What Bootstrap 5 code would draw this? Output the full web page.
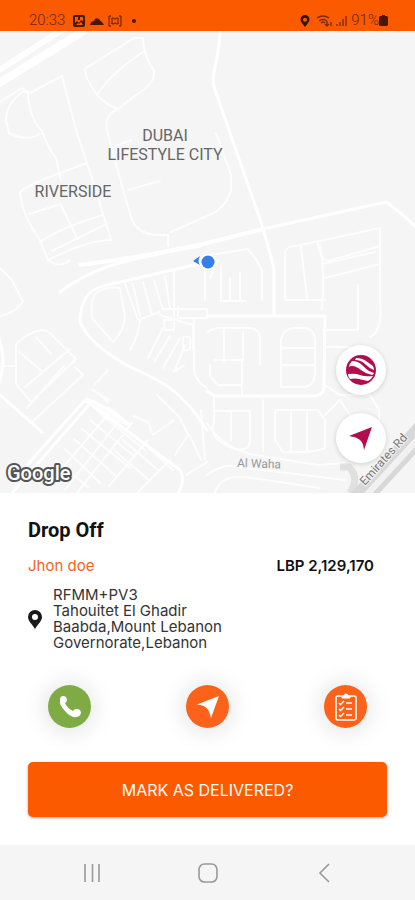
<!DOCTYPE html>
<html lang="en">
<head>
<meta charset="utf-8">
<meta name="viewport" content="width=device-width, initial-scale=1">
<title>Drop Off</title>
<link href="https://cdn.jsdelivr.net/npm/bootstrap@5.3.0/dist/css/bootstrap.min.css" rel="stylesheet">
<style>
  body { font-family: Inter, "Liberation Sans", sans-serif; color: #111; background: #fff; }
  .status-bar { background: #fb5a00; color: #6b2600; height: 31px; padding: 10px 27px 0 29px; font: 300 15px/21px Roboto, sans-serif; }
  .map-area { background: #f5f5f5; min-height: 300px; flex: 1 1 0; }
  .map-canvas { position: absolute; inset: 0; width: 100%; height: 100%; }
  .map-canvas text { font-family: Roboto, sans-serif; }
  .map-tools { position: absolute; right: 29px; bottom: 30px; gap: 18px; }
  .map-btn { width: 50px; height: 50px; background: #fff; box-shadow: 0 1px 5px rgba(0,0,0,.16); }
  .sheet { padding: 25px 28px 28px; }
  .sheet-title { font: 700 20px/24px Roboto, sans-serif; margin-bottom: 14px; }
  .customer { color: #f4641e; font-size: 15px; line-height: 20px; }
  .amount { font-size: 15px; line-height: 20px; font-weight: 600; padding-right: 13px; }
  .address { font-size: 15px; line-height: 16px; color: #333; margin: 11px 0 0; gap: 11px; }
  .actions { padding: 34px 20px 0; }
  .action-btn { width: 43px; height: 43px; background: #fc621a; box-shadow: 0 1px 22px 4px rgba(0,0,0,.1); }
  .action-call { background: #7fab45; }
  .deliver-btn { background: #fb5a00; color: #fff; height: 55px; margin-top: 34px; border-radius: 5px; font-size: 16px; box-shadow: 0 1px 3px rgba(0,0,0,.35); }
  .deliver-btn:hover { background: #e65200; color: #fff; }
  .system-nav { background: #f5f5f5; height: 55px; padding: 0 80px; }
</style>
<script src="https://cdn.jsdelivr.net/npm/bootstrap@5.3.0/dist/js/bootstrap.bundle.min.js"></script>
</head>
<body>
<div class="d-flex flex-column min-vh-100">
  <header class="status-bar d-flex justify-content-between align-items-center">
    <div class="d-flex align-items-center">
      <span>20:33</span>
      <svg class="ms-2" width="70" height="14" viewBox="0 0 70 14" aria-hidden="true">
        <rect x="0" y="1" width="12" height="12" rx="2" fill="#4a1800"/>
        <path d="M2 3h3v3h2V3h3v4L8 6 6 9 4 7 2 9z" fill="#fb5a00"/><path d="M3 11l2-2 1 1 2-2 2 3z" fill="#fb5a00"/>
        <path d="M17 11q1-4 4-4 1-4 5-2 1 2 3 3l2 3z" fill="#4a1800"/>
        <path d="M36 2v10M38 2h-2M38 12h-2M48 2v10M46 2h2M46 12h2M38 5l2-1 2 1 2-1 2 1M38 9l2 1 2-1 2 1 2-1M39 5v4M45 5v4" fill="none" stroke="#7a2b00" stroke-width="1.3"/>
        <circle cx="61" cy="7" r="2" fill="#4a1800"/>
      </svg>
    </div>
    <div class="d-flex align-items-center">
      <svg width="51" height="14" viewBox="0 0 51 14" aria-hidden="true">
        <path fill-rule="evenodd" d="M5 1a4.500 4.500 0 0 1 4.500 4.500C9.500 8 7 10 5 13 3 10 .5 8 .5 5.500A4.500 4.500 0 0 1 5 1zm0 2.700a2 2 0 1 0 0 4 2 2 0 0 0 0-4z" fill="#3a1200"/>
        <g fill="none" stroke="#7a2b00" stroke-width="1.3"><path d="M17 4q6-4 12 0M19 7q4-3 8 0M21 9q2-2 4 0"/><path d="M27 7v5M25 10l2 2 2-2M31 12V8"/></g>
        <path d="M37 10v2M40 8v4M43 5v7M46 2v10" stroke="#7a2b00" stroke-width="1.4"/>
      </svg>
      <span>91%</span>
      <svg width="9" height="13" viewBox="0 0 9 13" aria-hidden="true"><path d="M3 1h3v1h2l1 1v8l-1 1H1l-1-1V3l1-1h2z" fill="#4a1800"/></svg>
    </div>
  </header>

  <section class="map-area position-relative overflow-hidden" aria-label="Map">
    <svg class="map-canvas" viewBox="0 31 415 462" preserveAspectRatio="xMidYMid slice" role="img" aria-label="Streets around Dubai Lifestyle City">
      <g fill="none" stroke="#fff" stroke-linecap="round" stroke-linejoin="round">
        <g stroke-width="5">
          <path d="M-4 72L65 28" stroke-width="6"/><path d="M-4 85L95 24" stroke-width="8"/>
          <path d="M80 265Q150 256 207 243L263 229" stroke-width="4"/>
        </g>
        <g stroke-width="3">
          <path d="M263 229L386 202 Q398 210 418 229"/>
          <path d="M220 30C220 60 209 75 215 90L262 225 274 268V315"/>
          <path d="M60 292C90 270 110 262 200 246"/>
          <path d="M207 262L125 281C93 287 81 291 80 322 88 340 105 352 126 365 160 380 182 390 207 430"/>
          <path d="M207 316H325L324 385C325 393 320 396 311 396H215L207 391"/>
          <path d="M-2 336Q8 360-2 385M0 395L42 432M28 464L85 400 180 470Q186 480 178 493"/>
          <path d="M12 493L88 406M87 399Q108 407 130 425"/>
        </g>
        <g stroke-width="2" opacity=".85">
          <path d="M0 102L22 88 30 93 62 76M24 91L28 93Q29 118 42 131 48 148 56 158L61 180"/>
          <path d="M24 91Q6 103 6 120L9 133Q26 142 40 134"/>
          <path d="M62 76L76 130 92 178 111 240M87 163L60 173Q22 187 20 193 22 215 40 240L48 260"/>
          <path d="M29 214L61 204M61 205L77 238M40 242Q60 228 103 215M48 260Q88 240 111 240M52 251L104 225"/>
          <path d="M134 38L86 68Q82 73 97 95 105 104 118 109M97 95Q110 74 143 52M134 38H143Q143 55 154 71 155 84 136 95L118 109"/>
          <path d="M118 109Q104 115 107 130 117 170 132 220 137 232 154 235H168V246"/>
          <path d="M113 147L131 140M128 190L160 181M171 232Q180 228 207 216 225 210 231 190V175L216 133"/>
          <path d="M0 268L12 280 23 302Q15 313 0 316M48 260Q60 269 70 260"/>
          <path d="M16 344Q40 322 52 335L76 359 31 402 16 384zM36 337L51 354M19 352L42 371M25 387L70 349M75 367L83 375 31 423M64 366L27 408M0 366H15"/>
          <path d="M98 292Q90 297 92 318L113 342Q125 330 125 316L120 288Q108 286 98 292"/>
          <path d="M125 284L138 320 160 312M133 284L140 316M143 282L152 315M154 280L163 310M165 276L170 308M174 270V325"/>
          <path d="M140 320Q138 338 130 350M163 328L148 358M170 336L154 362M180 338L163 368M185 345L174 372M174 372L184 365"/>
          <path d="M162 309H207V318H178V307M164 320H174V330H165zM183 337H190V350H183zM194 318V370Q196 382 207 388"/>
          <path d="M160 315L193 325V350M205 258V300M94 385L108 370M92 390L110 400M94 390L108 402M157 395L178 416 192 440 201 460M133 416L148 422 153 435 174 420M180 418L188 435 175 455"/>
          <path d="M110 412L48 485M119 421L65 490M132 423L77 493M148 440L109 486M170 460L137 493M98 412L145 450M90 420L134 456M82 429L130 468M74 439L117 477M65 449L100 483M56 460L88 487M130 432L165 462M123 440L158 470M115 451L150 481M142 442L173 470"/>
          <path d="M210 278L218 260M221 265V301H246M230 278V300M240 272V301M210 255L248 249 255 258 262 270V300M285 252V300H325M301 247L307 298M320 246Q325 270 322 310M325 278L380 264M322 264L375 252"/>
          <path d="M285 252Q287 246 296 246L380 228V300Q383 330 370 337M318 243Q320 260 328 261L380 246M358 285V330H323M327 347H350L342 385"/>
          <path d="M208 332Q212 328 222 328H250Q260 328 260 340V364M224 328V362M215 360H242V395M243 332V360M210 365V376L218 385H242"/>
          <path d="M281 340Q283 328 295 328H304Q315 329 315 342V372Q315 386 304 387H281zM281 348H314M281 365H314"/>
          <path d="M214 397V423Q208 440 235 449M215 411H250V442Q248 452 235 449M231 413V440M263 400V451M275 410H318L325 420V448Q315 453 283 452L275 440zM291 410V451M307 410V450"/>
          <path d="M207 423Q220 445 250 454L318 465 345 463M207 475Q225 461 245 468L345 480M215 493Q220 475 245 477L320 488M325 415L340 400 370 445"/>
          <path d="M186 475L207 462M201 410L205 460M325 385L340 395H370L379 410V430"/>
        </g>
      </g>
      <path d="M85 399L98 412 132 428 114 409z" fill="#fff" opacity=".7"/>
      <g fill="none">
        <path d="M340 467H349Q360 478 350 493" stroke="#e0e0e0" stroke-width="7"/>
        <path d="M352 499L420 425" stroke="#d8d8d8" stroke-width="10"/><path d="M362 500L420 439" stroke="#f1f1f1" stroke-width="6"/><path d="M366 504L424 441" stroke="#d8d8d8" stroke-width="5"/>
      </g>
      <g fill="#666" stroke="#f5f5f5" stroke-width="2" paint-order="stroke" font-size="16">
        <text x="165" y="141" text-anchor="middle">DUBAI</text>
        <text x="165" y="160" text-anchor="middle">LIFESTYLE CITY</text>
        <text x="73" y="197" text-anchor="middle">RIVERSIDE</text>
        <text x="237" y="467" font-size="12" fill="#999" transform="rotate(2 237 467)">Al Waha</text>
        <text x="365" y="486" font-size="12" fill="#777" transform="rotate(-48 365 486)">Emirates Rd</text>
      </g>
      <text x="7" y="480" font-size="20" font-weight="500" fill="#fff" stroke="#555" stroke-width="4" stroke-linejoin="round" paint-order="stroke">Google</text>
      <circle cx="208" cy="262" r="8.500" fill="#fff"/><circle cx="208" cy="262" r="6.500" fill="#347fea"/>
      <path d="M193 261L200 256Q197 261 200 265z" fill="#347fea"/>
    </svg>
    <div class="map-tools d-flex flex-column">
      <button type="button" class="map-btn btn rounded-circle border-0 p-0 d-flex align-items-center justify-content-center" aria-label="Satellite view">
        <svg width="30" height="30" viewBox="0 0 30 30">
          <circle cx="15" cy="15" r="15" fill="#b10e50"/>
          <path d="M10 3Q16 3 20 6T27 11Q28 14 28 15 23 13 19 9T9 5z" fill="#fff"/>
          <path d="M6 6Q12 6 16 10T23 16L28 18Q27 20 26 20 20 19 15 15T6 11Q4 11 3 12 3 9 6 6z" fill="#fff"/>
          <path d="M2 19Q9 18 14 20T27 21Q25 25 22 26 17 25 13 24T4 24Q2 22 2 19z" fill="#fff"/>
        </svg>
      </button>
      <button type="button" class="map-btn btn rounded-circle border-0 p-0 d-flex align-items-center justify-content-center" aria-label="My location">
        <svg width="26" height="26" viewBox="0 0 26 26"><path d="M24 2L16 25Q15 17 12 15 9 12 1 11z" fill="#b10e50"/></svg>
      </button>
    </div>
  </section>

  <main class="sheet">
    <h1 class="sheet-title">Drop Off</h1>
    <div class="d-flex justify-content-between">
      <span class="customer">Jhon doe</span>
      <span class="amount">LBP 2,129,170</span>
    </div>
    <address class="address d-flex align-items-center">
      <svg width="14" height="19" viewBox="0 0 14 19" aria-hidden="true"><path fill-rule="evenodd" d="M7 0a7 7 0 0 1 7 7C14 11 10 14 7 19 4 14 0 11 0 7A7 7 0 0 1 7 0zm0 4a3 3 0 1 0 0 6 3 3 0 0 0 0-6z" fill="#1a1a1a"/></svg>
      <span>RFMM+PV3<br>Tahouitet El Ghadir<br>Baabda,Mount Lebanon<br>Governorate,Lebanon</span>
    </address>
    <div class="actions d-flex justify-content-between">
      <button type="button" class="action-btn action-call btn rounded-circle border-0 p-0 d-flex align-items-center justify-content-center" aria-label="Call customer">
        <svg width="24" height="24" viewBox="0 0 24 24"><path d="M2 5Q2 1 5 1 8 1 9 4 9 7 7 8 9 13 15 16 17 13 20 14 23 15 23 18 22 22 18 22 13 23 7 16 1 10 2 5z" fill="#fff"/></svg>
      </button>
      <button type="button" class="action-btn btn rounded-circle border-0 p-0 d-flex align-items-center justify-content-center" aria-label="Navigate">
        <svg width="24" height="24" viewBox="0 0 24 24"><path d="M23 1L15 23Q13 15 11 13.500 8 10 1 9.500z" fill="#fff"/></svg>
      </button>
      <button type="button" class="action-btn btn rounded-circle border-0 p-0 d-flex align-items-center justify-content-center" aria-label="Order checklist">
        <svg width="22" height="28" viewBox="0 0 22 28" fill="none" stroke="#fff">
          <rect x="1" y="3" width="20" height="24" rx="2" stroke-width="1.6"/>
          <path d="M7 5V3h2q0-2 2-2t2 2h2v2z" fill="#fff"/>
          <path d="M4 10l1.500 1.500L9 8M4 16l1.500 1.500L9 14M4 22l1.500 1.500L9 20M11 10h6M11 16h6M11 22h6" stroke-width="1.5"/>
        </svg>
      </button>
    </div>
    <button type="button" class="deliver-btn btn w-100 border-0">MARK AS DELIVERED?</button>
  </main>

  <nav class="system-nav d-flex justify-content-between align-items-center" aria-label="System navigation">
    <button type="button" class="btn border-0 p-0 d-flex" aria-label="Recent apps"><svg width="20" height="20" viewBox="0 0 20 20"><path d="M5 1v18M12.500 1v18M19 1v18" stroke="#999" stroke-width="1.6"/></svg></button>
    <button type="button" class="btn border-0 p-0 d-flex" aria-label="Home"><svg width="20" height="20" viewBox="0 0 20 20"><rect x="1" y="1" width="18" height="18" rx="5.500" fill="none" stroke="#999" stroke-width="1.6"/></svg></button>
    <button type="button" class="btn border-0 p-0 d-flex" aria-label="Back"><svg width="20" height="20" viewBox="0 0 20 20"><path d="M14 1L5 10l9 9" fill="none" stroke="#999" stroke-width="1.6"/></svg></button>
  </nav>
</div>
</body>
</html>
